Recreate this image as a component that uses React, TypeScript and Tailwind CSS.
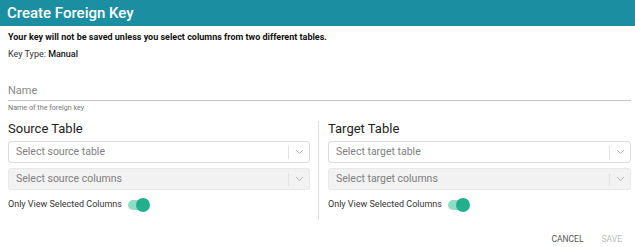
import React from "react";

function Chevron() {
  return (
    <svg width="9" height="6" viewBox="0 0 9 6" fill="none">
      <path d="M1 1l3.5 3.5L8 1" stroke="#b5b5b5" strokeWidth="1" />
    </svg>
  );
}

function SelectBox({ placeholder, disabled }: { placeholder: string; disabled?: boolean }) {
  return (
    <div
      className={
        "flex h-[22px] items-center rounded-[3px] border pl-[7px] " +
        (disabled ? "border-[#e8e8e8] bg-[#f2f2f2]" : "border-[#dcdcdc] bg-white")
      }
    >
      <span className="flex-1 text-[10.5px] text-[#808080]">{placeholder}</span>
      <span className="h-[13px] w-px bg-[#e2e2e2]" />
      <span className="flex w-[20px] justify-center">
        <Chevron />
      </span>
    </div>
  );
}

function Toggle() {
  return (
    <div className="relative h-[18px] w-[23px]">
      <div className="absolute left-0 top-[4px] h-[10px] w-[20px] rounded-full bg-[#8ddcc6]" />
      <div className="absolute left-[8px] top-[2px] h-[14px] w-[14px] rounded-full bg-[#22b08c]" />
    </div>
  );
}

function TableColumn({ title, table, columns }: { title: string; table: string; columns: string }) {
  return (
    <div className="flex flex-col">
      <div className="text-[13px] leading-[16px] text-[#222]">{title}</div>
      <div className="mt-[4px]">
        <SelectBox placeholder={table} />
      </div>
      <div className="mt-[5px]">
        <SelectBox placeholder={columns} disabled />
      </div>
      <div className="mt-[6px] flex items-center gap-[6px]">
        <span className="text-[9px] text-[#333]">Only View Selected Columns</span>
        <Toggle />
      </div>
    </div>
  );
}

export default function App() {
  return (
    <div className="h-[247px] w-[635px] overflow-hidden bg-white" style={{ fontFamily: "Roboto, 'Liberation Sans', sans-serif" }}>
      <div className="flex h-[26px] items-center bg-[#1b8fa1] px-[7px] text-[15px] font-medium text-white">
        Create Foreign Key
      </div>

      <div className="pl-[8px] pr-[3px]">
        <div className="mt-[4px] text-[9px] font-bold leading-[14px] text-[#111]">
          Your key will not be saved unless you select columns from two different tables.
        </div>
        <div className="mt-[3px] text-[9px] leading-[14px] text-[#333]">
          Key Type: <span className="font-medium text-[#111]">Manual</span>
        </div>

        <div className="mt-[23px] mr-[1px] border-b-[1.5px] border-[#c4c4c4] pb-[2px] text-[11px] leading-[14px] text-[#888]">
          Name
        </div>
        <div className="mt-[1px] text-[7.2px] leading-[12px] text-[#777]">Name of the foreign key</div>

        <div className="mt-[7px] flex">
          <div className="w-[302px]">
            <TableColumn title="Source Table" table="Select source table" columns="Select source columns" />
          </div>
          <div className="ml-[8px] mr-[9px] h-[99px] w-px bg-[#dedede]" />
          <div className="w-[303px]">
            <TableColumn title="Target Table" table="Select target table" columns="Select target columns" />
          </div>
        </div>

        <div className="mt-[13px] flex justify-end gap-[18px] pr-[10px] text-[8.5px] leading-[12px]">
          <span className="text-[#555]">CANCEL</span>
          <span className="text-[#bbb]">SAVE</span>
        </div>
      </div>
    </div>
  );
}
